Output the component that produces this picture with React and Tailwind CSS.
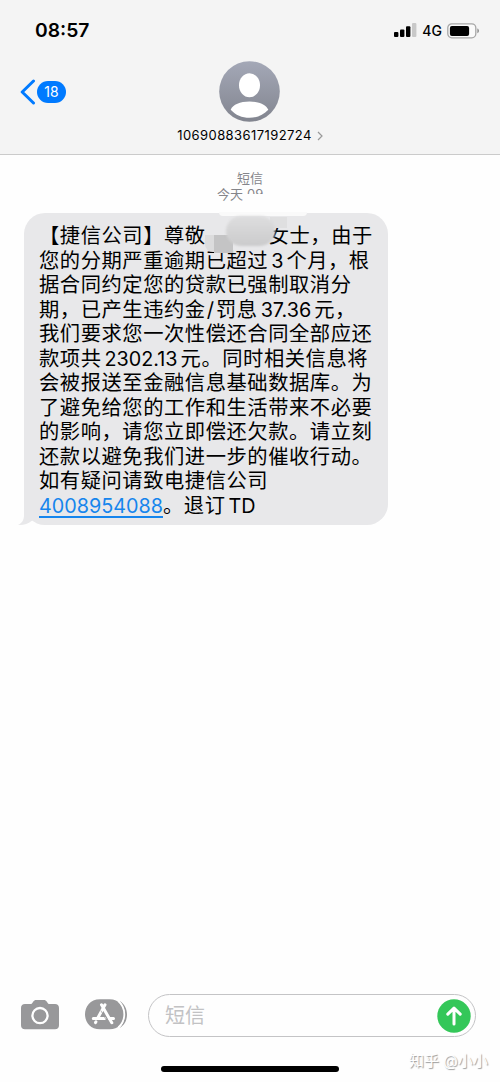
const LINES = [
  "您的分期严重逾期已超过3个月，根",
  "据合同约定您的贷款已强制取消分",
  "期，已产生违约金/罚息37.36元，",
  "我们要求您一次性偿还合同全部应还",
  "款项共2302.13元。同时相关信息将",
  "会被报送至金融信息基础数据库。为",
  "了避免给您的工作和生活带来不必要",
  "的影响，请您立即偿还欠款。请立刻",
  "还款以避免我们进一步的催收行动。",
  "如有疑问请致电捷信公司",
];

const SignalIcon = () => (
  <svg width="23" height="15" viewBox="0 0 23 15">
    <rect x="0" y="9" width="4.4" height="5" rx="1" />
    <rect x="6" y="6.5" width="4.4" height="7.5" rx="1" />
    <rect x="12" y="3.3" width="4.4" height="10.7" rx="1" />
    <rect x="18" y="0" width="4.4" height="14" rx="1" fill="#c8c8c8" />
  </svg>
);

const BatteryIcon = () => (
  <svg width="33" height="16" viewBox="0 0 33 16" className="block">
    <rect x="0.8" y="0.8" width="28" height="14" rx="4" fill="#fafafa" stroke="#a6a6a6" strokeWidth="1.3" />
    <rect x="2.9" y="2.9" width="19.2" height="10" rx="2" />
    <path d="M30.4 5.5c2 .7 2 4 0 4.7z" fill="#888" />
  </svg>
);

const Avatar = () => (
  <svg width="61" height="61" viewBox="0 0 61 61" className="block">
    <defs>
      <linearGradient id="avatar" x1="0" y1="0" x2="0" y2="1">
        <stop offset="0" stopColor="#a4a8b7" />
        <stop offset="1" stopColor="#82858f" />
      </linearGradient>
    </defs>
    <circle cx="30.5" cy="30.5" r="30.3" fill="url(#avatar)" />
    <ellipse cx="30.5" cy="24.3" rx="10.5" ry="12" fill="#fff" />
    <path d="M11.7 48.7C14 43.5 21 40.5 30.5 40.5s16.5 3 18.8 8.2C44.5 54 38 56.8 30.5 56.8s-14-2.8-18.8-8.1z" fill="#fff" />
  </svg>
);

const CameraIcon = () => (
  <svg width="38" height="30" viewBox="0 0 38 30" className="block">
    <path
      d="M4 4h5.5c1 0 1.5-.4 2-1.2l.8-1.2C13 .5 13.8 0 15 0h8c1.2 0 2 .5 2.7 1.6l.8 1.2c.5.8 1 1.2 2 1.2H34c2.5 0 4 1.5 4 4v17.3c0 2.5-1.5 4-4 4H4c-2.500 0-4-1.5-4-4V8c0-2.5 1.5-4 4-4z"
      fill="#98989a"
    />
    <circle cx="19" cy="15.6" r="7.6" fill="none" stroke="#fff" strokeWidth="2.3" />
  </svg>
);

const AppStoreIcon = () => (
  <svg width="43" height="31" viewBox="0 0 43 31" className="block">
    <path d="M15 .3h9.5c19.500 0 19.500 30 0 30H15c-20 0-20-30 0-30z" fill="#98989a" />
    <path d="M34.500 2c10 5 10 22 0 27 7-7 7-20 0-27z" fill="#98989a" />
    <path d="M33.3 2c8 7 8 19.500 0 26.500" fill="none" stroke="#fff" strokeWidth="1.8" />
    <g stroke="#fff" strokeWidth="3" strokeLinecap="round" fill="none">
      <path d="M20 5.8 12.5 19.5M16.5 5.8l10.3 18" />
      <path d="M8.300 19.5h11.5M24.5 19.500h4" />
      <path d="m11 22.700-.5.9" />
    </g>
    <path d="m15.8 11.500 5.600 9.800" stroke="#98989a" strokeWidth="0.7" />
  </svg>
);

const SendIcon = () => (
  <svg width="34" height="34" viewBox="0 0 34 34" className="block">
    <circle cx="17" cy="17" r="16.7" fill="#34c759" />
    <path d="M17 25V9.500M10.800 15.2 17 9.200l6.200 6" fill="none" stroke="#fff" strokeWidth="3" strokeLinecap="round" strokeLinejoin="round" />
  </svg>
);

// digits and slashes are set tighter than the Chinese around them
const MessageLine = ({ text }) => (
  <div className="h-[24.5px] whitespace-nowrap">
    {text.split(/([\d.]+|\/)/).map((part, i) => {
      if (part === "/") return <span key={i} className="mr-[2px] ml-[1px] tracking-normal">{part}</span>;
      return /^[\d.]+$/.test(part) ? (
        <span key={i} className="mr-[3px] ml-[3px] text-[19.8px] tracking-normal">{part}</span>
      ) : (
        <span key={i}>{part}</span>
      );
    })}
  </div>
);

const Header = () => (
  <header className="h-[155px] border-b border-[#cbcbcb] bg-[#f4f4f4]">
    <div className="flex h-[61px] items-center justify-between pr-[20px] pl-[35px]">
      <div className="text-[19.3px] font-semibold">08:57</div>
      <div className="flex items-center">
        <SignalIcon />
        <span className="ml-[5px] text-[14px] font-medium">4G</span>
        <div className="ml-[5px]">
          <BatteryIcon />
        </div>
      </div>
    </div>
    <div className="grid grid-cols-3">
      <div className="flex h-[61px] items-center pl-5">
        <svg width="16" height="26" viewBox="0 0 16 26">
          <path d="M13.500 2 2.200 13l11.300 11" fill="none" stroke="#007aff" strokeWidth="3" strokeLinecap="round" strokeLinejoin="round" />
        </svg>
        <div className="ml-[1px] flex h-[22px] w-[29px] items-center justify-center rounded-full bg-[#007aff] text-[14px] text-white">
          18
        </div>
      </div>
      <div className="flex flex-col items-center">
        <Avatar />
        <div className="mt-[4px] flex items-center whitespace-nowrap text-[13px] leading-[19px] tracking-[0.42px]">
          <span>10690883617192724</span>
          <svg width="6" height="10" viewBox="0 0 6 10" className="ml-[5px]">
            <path d="m1 1 4 4-4 4" fill="none" stroke="#999" strokeWidth="1.2" />
          </svg>
        </div>
      </div>
    </div>
  </header>
);

const Bubble = () => (
  <div className="relative ml-6 h-[312px] w-[364px] rounded-[21px] bg-[#e8e8ea] pt-[11px] pl-[15px] text-[20.3px] leading-[24.5px] tracking-[0.55px]">
    <svg width="24" height="24" viewBox="0 0 24 24" className="absolute -bottom-px -left-[6px]">
      <path d="M6 0v13c0 5-2 8-6 10 5 .5 10-1 13.500-4L22 14V0z" fill="#e8e8ea" />
    </svg>
    <div className="relative">
      <div className="flex h-[24.5px] whitespace-nowrap">
        <span>【捷信公司】尊敬</span>
        <span className="ml-[63px]">女士，由于</span>
      </div>
      {LINES.map((line) => (
        <MessageLine key={line} text={line} />
      ))}
      <div className="h-[24.5px] whitespace-nowrap">
        <span className="text-[19.8px] tracking-normal text-[#1685ed] underline decoration-[1.5px] underline-offset-[3px]">4008954088</span>
        <span>。退订</span>
        <span className="ml-[3px] text-[19.8px] tracking-normal">TD</span>
      </div>
    </div>
    {/* censored name */}
    <div className="absolute -top-px left-[195px] h-[4px] w-[88px] rounded-b bg-[#fafafa]" />
    <div className="absolute top-[4px] left-[246px] h-[11px] w-[17px] bg-[#dfdfe0]" />
    <div className="absolute top-[22px] left-[181px] h-[17px] w-[20px] rounded-bl-lg bg-[#dcdcdd]" />
    <div className="absolute top-[22px] left-[190px] h-[18px] w-[19px] bg-[#c4c4c5]" />
    <div className="absolute top-[3px] left-[202px] h-[30px] w-[49px] rounded-[15px] bg-linear-to-b from-[#dededf] to-[#cbcbcc] blur-[1px]" />
  </div>
);

export default function App() {
  return (
    <div className="flex h-[1082px] w-[500px] flex-col overflow-hidden bg-[#fefefe] font-['Inter','Noto_Sans_CJK_SC',sans-serif] text-black">
      <Header />
      <main className="flex-1">
        <div className="flex h-[58px] flex-col items-center pt-[15px] text-[13px] leading-[16px] text-[#85858a]">
          <div>短信</div>
          <div className="relative flex w-[66px] whitespace-nowrap">
            <span>今天</span>
            <span className="ml-[4px]">09</span>
            {/* time is painted over */}
            <div className="absolute top-[8px] left-[29px] h-[9px] w-[40px] bg-[#fefefe]" />
          </div>
        </div>
        <Bubble />
      </main>
      <footer className="flex h-[88px] items-start pl-[21px]">
        <div className="mt-[6px]">
          <CameraIcon />
        </div>
        <div className="mt-[5px] ml-[26px]">
          <AppStoreIcon />
        </div>
        <div className="ml-[20px] flex h-[43px] w-[328px] items-center justify-between rounded-full border border-[#c4c4c6] pr-[4px] pl-[16px]">
          <span className="text-[20px] text-[#c2c2c4]">短信</span>
          <SendIcon />
        </div>
      </footer>
      <div className="absolute top-[1066px] left-[161px] h-[6px] w-[178px] rounded-full bg-black" />
      <div className="absolute top-[1050px] left-[409px] text-[15px] leading-[22px] whitespace-nowrap text-white [text-shadow:1px_1px_1px_#999]">
        知乎 @小小
      </div>
    </div>
  );
}
